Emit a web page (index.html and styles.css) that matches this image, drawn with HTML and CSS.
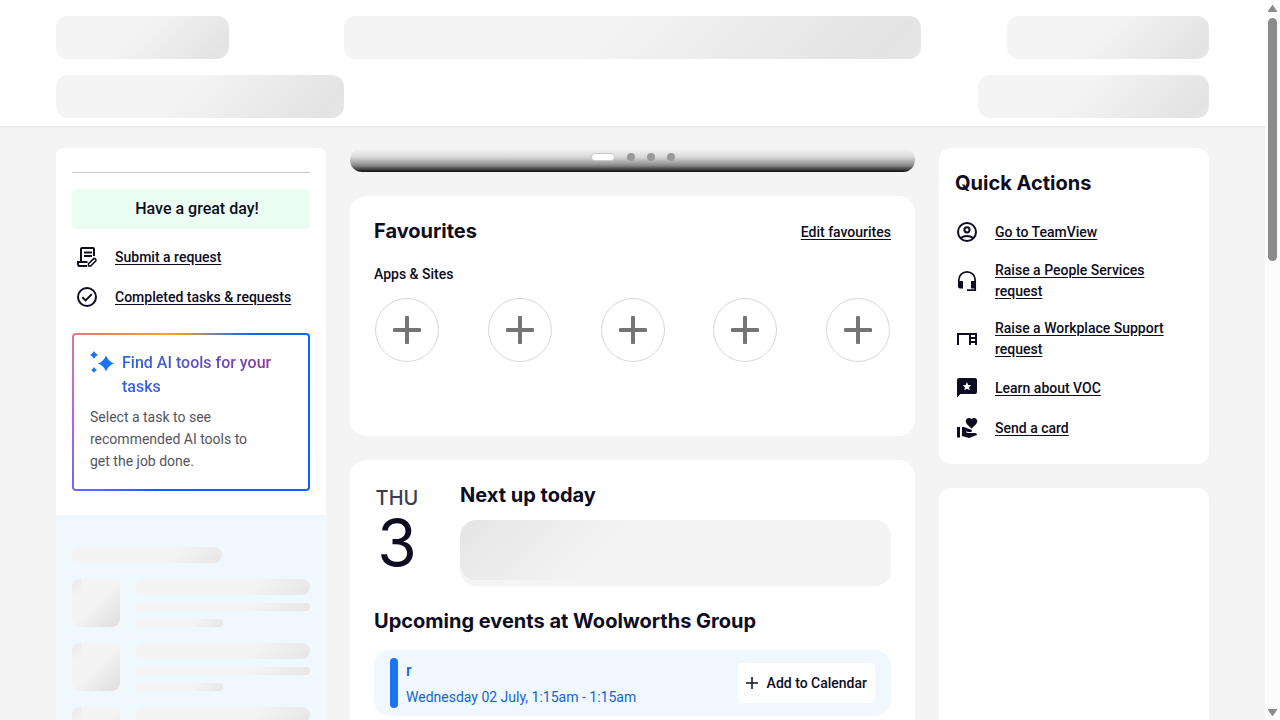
FILE: index.html
```html
<!DOCTYPE html>
<html lang="en">
<head>
<meta charset="utf-8">
<meta name="viewport" content="width=device-width, initial-scale=1">
<title>Home</title>
<link rel="stylesheet" href="styles.css">
</head>
<body>
<div class="viewport">
  <header class="header">
    <div class="header-row">
      <div class="bone bone-logo"></div>
      <div class="bone"></div>
      <div class="bone bone-user"></div>
    </div>
    <div class="header-row">
      <div class="bone"></div>
      <div></div>
      <div class="bone bone-tools"></div>
    </div>
  </header>

  <main class="columns">
    <aside class="profile">
      <div class="profile-top">
        <hr class="divider">
        <p class="greeting">Have a great day!</p>
        <ul class="links links-inset">
          <li>
            <svg class="icon" viewBox="0 0 24 24" aria-hidden="true"><g fill="none" stroke="currentColor" stroke-width="2"><path d="M6 16.500V4a1 1 0 0 1 1-1h11a1 1 0 0 1 1 1v7M12 21H5c-1.300 0-2-.800-2-2v-2h9.500"/><path d="M9 7.500h8M9 11h8"/><path d="M13.500 21v-2.200l5.200-5.200c.8-.8 3 1.300 2.200 2.200L15.700 21z" stroke-width="1.600"/></g></svg>
            <a href="#">Submit a request</a>
          </li>
          <li>
            <svg class="icon" viewBox="0 0 24 24" aria-hidden="true"><g fill="none" stroke="currentColor" stroke-width="2"><circle cx="12" cy="12" r="9"/><path d="M7.300 12.200l3.300 3.200 6.200-6.300"/></g></svg>
            <a href="#">Completed tasks &amp; requests</a>
          </li>
        </ul>
        <section class="ai">
          <div class="ai-head">
            <svg class="icon ai-icon" viewBox="0 0 24 24" aria-hidden="true"><path fill="currentColor" d="M16 4.500q2.200 5.800 8 8-5.800 2.200-8 8-2.200-5.800-8-8 5.800-2.200 8-8zM4 0q1.200 2.800 4 4-2.800 1.200-4 4-1.200-2.800-4-4 2.800-1.200 4-4zM4 16q.9 2.100 3 3-2.100.9-3 3-.9-2.100-3-3 2.100-.9 3-3z"/></svg>
            <h2 class="ai-title">Find AI tools for your tasks</h2>
          </div>
          <p class="ai-text">Select a task to see recommended AI tools to get the job done.</p>
        </section>
      </div>
      <div class="feed">
        <div class="bone-sm feed-title"></div>
        <div class="feed-item"><div class="bone-avatar"></div><div class="feed-lines"><div class="bone-sm"></div><div class="bone-sm bone-thin"></div><div class="bone-sm bone-thin bone-half"></div></div></div>
        <div class="feed-item"><div class="bone-avatar"></div><div class="feed-lines"><div class="bone-sm"></div><div class="bone-sm bone-thin"></div><div class="bone-sm bone-thin bone-half"></div></div></div>
        <div class="feed-item"><div class="bone-avatar"></div><div class="feed-lines"><div class="bone-sm"></div><div class="bone-sm bone-thin"></div><div class="bone-sm bone-thin bone-half"></div></div></div>
      </div>
    </aside>

    <div class="middle">
      <div class="carousel">
        <button class="dot dot-active" aria-label="Slide 1"></button>
        <button class="dot" aria-label="Slide 2"></button>
        <button class="dot" aria-label="Slide 3"></button>
        <button class="dot" aria-label="Slide 4"></button>
      </div>

      <section class="card favourites">
        <div class="card-head">
          <h2 class="title">Favourites</h2>
          <a class="edit" href="#">Edit favourites</a>
        </div>
        <h3 class="subtitle">Apps &amp; Sites</h3>
        <div class="slots">
          <button class="slot" aria-label="Add favourite 1"><svg viewBox="0 0 28 28" aria-hidden="true"><path d="M14 1.500v25M1.500 14h25"/></svg></button>
          <button class="slot" aria-label="Add favourite 2"><svg viewBox="0 0 28 28" aria-hidden="true"><path d="M14 1.500v25M1.500 14h25"/></svg></button>
          <button class="slot" aria-label="Add favourite 3"><svg viewBox="0 0 28 28" aria-hidden="true"><path d="M14 1.500v25M1.500 14h25"/></svg></button>
          <button class="slot" aria-label="Add favourite 4"><svg viewBox="0 0 28 28" aria-hidden="true"><path d="M14 1.500v25M1.500 14h25"/></svg></button>
          <button class="slot" aria-label="Add favourite 5"><svg viewBox="0 0 28 28" aria-hidden="true"><path d="M14 1.500v25M1.500 14h25"/></svg></button>
        </div>
      </section>

      <section class="card agenda">
        <div class="today">
          <div class="date"><span class="weekday">THU</span><span class="day">3</span></div>
          <div class="next">
            <h2 class="title">Next up today</h2>
            <div class="next-bone"><div class="next-shine"></div></div>
          </div>
        </div>
        <h2 class="title upcoming">Upcoming events at Woolworths Group</h2>
        <article class="event">
          <span class="event-bar"></span>
          <div class="event-info">
            <h3 class="event-name">r</h3>
            <p class="event-time">Wednesday 02 July, 1:15am - 1:15am</p>
          </div>
          <button class="add"><svg viewBox="0 0 12 12" aria-hidden="true"><path d="M6 0v12M0 6h12"/></svg>Add to Calendar</button>
        </article>
      </section>
    </div>

    <aside class="side">
      <section class="card quick">
        <h2 class="title quick-title">Quick Actions</h2>
        <ul class="links">
          <li>
            <svg class="icon" viewBox="0 0 24 24" aria-hidden="true"><g fill="none" stroke="currentColor" stroke-width="2"><circle cx="12" cy="12" r="9"/><circle cx="12" cy="9.800" r="2.600"/><path d="M5.800 18c3.400-2.700 9-2.700 12.400 0"/></g></svg>
            <a href="#">Go to TeamView</a>
          </li>
          <li>
            <svg class="icon" viewBox="0 0 24 24" aria-hidden="true"><path d="M3.800 13v-2a8.200 8.200 0 0 1 16.400 0v10.200H12" fill="none" stroke="currentColor" stroke-width="1.700"/><path d="M3 12h5v7.500H5a2 2 0 0 1-2-2zM16 12h5v7.500h-5z" fill="currentColor"/></svg>
            <a href="#">Raise a People Services request</a>
          </li>
          <li>
            <svg class="icon" viewBox="0 0 24 24" aria-hidden="true"><path fill="currentColor" d="M2 6v12h2V8h10v10h2v-2h4v2h2V6zm18 2v2h-4V8zm-4 6v-2h4v2z"/></svg>
            <a href="#">Raise a Workplace Support request</a>
          </li>
          <li>
            <svg class="icon" viewBox="0 0 24 24" aria-hidden="true"><path fill="currentColor" fill-rule="evenodd" d="M4 2h16a2 2 0 0 1 2 2v12a2 2 0 0 1-2 2H5.500L2 21.500V4a2 2 0 0 1 2-2zm8 4l-1.200 2.900-3.100.3 2.300 2-.7 3.100 2.700-1.600 2.700 1.600-.7-3.100 2.300-2-3.100-.3z"/></svg>
            <a href="#">Learn about VOC</a>
          </li>
          <li>
            <svg class="icon" viewBox="0 0 24 24" aria-hidden="true"><path fill="currentColor" d="M2 11h3v10.500H2zM16.500 3.250C17.150 2.490 17.960 2 19 2c1.850 0 3.300 1.450 3.300 3.300 0 2.270-2.710 4.400-5.800 7.200-3.090-2.810-5.800-4.940-5.800-7.200C10.700 3.450 12.150 2 14 2c1.040 0 1.850.49 2.500 1.250zM20 17h-7l-2.090-.73.33-.94L13 16h2.820c.65 0 1.180-.53 1.180-1.180 0-.49-.31-.93-.77-1.110L8.970 11H7v9.020L14 22l8.010-3c-.01-1.100-.9-2-2.010-2z"/></svg>
            <a href="#">Send a card</a>
          </li>
        </ul>
      </section>
      <section class="card blank"></section>
    </aside>
  </main>
</div>
<div class="scrollbar" aria-hidden="true">
  <svg class="arrow" viewBox="0 0 9 7"><path d="M4.500 0Q5 0 5.500 1L9 6v1H0V6l3.500-5Q4 0 4.500 0z"/></svg>
  <div class="track"><div class="thumb"></div></div>
  <svg class="arrow" viewBox="0 0 9 7"><path d="M4.500 7Q4 7 3.500 6L0 1V0h9v1L5.500 6Q5 7 4.500 7z"/></svg>
</div>
</body>
</html>
```
FILE: styles.css
```css
* { box-sizing: border-box; }

body {
  margin: 0;
  display: flex;
  height: 100vh;
  overflow: hidden;
  background: #f4f4f4;
  color: #0d0c22;
  font: 400 14px/20px Roboto, "Liberation Sans", sans-serif;
}

h2, h3, p, ul { margin: 0; padding: 0; }
ul { list-style: none; }
a { color: inherit; }
button { border: 0; padding: 0; font: inherit; color: inherit; cursor: pointer; }

.viewport { flex: 1; min-width: 0; overflow: hidden; }

/* Header placeholders */
.header {
  display: grid;
  gap: 16px;
  padding: 16px 56px 8px;
  background: #fff;
  box-shadow: 0 1px 2px rgba(0, 0, 0, 0.07);
}
.header-row { display: grid; grid-template-columns: 25% 50% 25%; }
.bone {
  height: 43px;
  border-radius: 12px;
  background: linear-gradient(135deg, #f4f4f4 43%, #e3e3e3 92%, #e7e7e7);
}
.bone-logo { width: 60%; }
.bone-user { width: 70%; justify-self: end; }
.bone-tools { width: 80%; justify-self: end; }

.columns {
  display: grid;
  grid-template-columns: 270px minmax(0, 1fr) 270px;
  gap: 24px;
  padding: 22px 56px 24px;
}
.card { background: #fff; border-radius: 16px; }
.title { font: 700 20px/24px Inter, "Liberation Sans", sans-serif; }

/* Left column */
.profile { border-radius: 8px; overflow: hidden; background: #f0f8ff; }
.profile-top { padding: 24px 16px; background: #fff; }
.divider { height: 1px; margin: 0 0 16px; border: 0; background: #c8c8c8; }
.greeting {
  padding: 8px 8px 8px 20px;
  border-radius: 4px;
  background: #ebfdf3;
  font-size: 16px;
  font-weight: 500;
  line-height: 24px;
  text-align: center;
}
.links li {
  display: flex;
  align-items: center;
  gap: 16px;
  min-height: 40px;
  padding: 8px 0;
  font-weight: 500;
  line-height: 21px;
}
.links a { text-underline-offset: 2px; }
.links-inset { padding: 8px 3px 16px; }
.icon { flex: none; width: 24px; height: 24px; }

.ai {
  padding: 16px 16px 17px;
  border: 2px solid transparent;
  border-radius: 4px;
  background:
    linear-gradient(#fff, #fff) padding-box,
    conic-gradient(#c49a4c 0deg, #0a66ff 40deg, #0066ff 205deg, #6a6af8 236deg, #c060f0 272deg, #e07a80 304deg, #ffa800 343deg, #c49a4c 360deg) border-box;
}
.ai-head { display: flex; gap: 8px; margin-bottom: 7px; }
.ai-icon { color: #1a73f0; }
.ai-title {
  font-size: 16px;
  font-weight: 500;
  line-height: 24px;
  background: linear-gradient(90deg, #2a66e4, #8a389c 150px);
  -webkit-background-clip: text;
  background-clip: text;
  color: transparent;
}
.ai-text { max-width: 172px; line-height: 22px; color: #54545f; }

.feed { display: grid; gap: 16px; padding: 32px 16px 16px; }
.feed-item { display: grid; grid-template-columns: 48px 1fr; gap: 16px; }
.feed-lines { display: grid; gap: 8px; }
.bone-sm {
  height: 16px;
  border-radius: 8px;
  background: linear-gradient(135deg, #f4f4f4 65%, #e6e6e6);
}
.bone-thin { height: 8px; border-radius: 4px; }
.bone-half { width: 50%; }
.feed-title { width: 150px; }
.bone-avatar {
  height: 48px;
  border-radius: 8px;
  background:
    linear-gradient(135deg, #e9e9e9, #f4f4f4) 0 0 / 9px 14px no-repeat,
    linear-gradient(135deg, #f4f4f4 48%, #e2e2e2 90%, #e8e8e8);
}

/* Middle column */
.middle { display: grid; align-content: start; gap: 24px; }
.carousel {
  display: flex;
  justify-content: center;
  gap: 12px;
  height: 24px;
  padding-top: 5px;
  border-radius: 12px;
  background: linear-gradient(#f4f4f4 4%, #d8d8d8 38%, #8c8c8c 72%, #101010);
}
.dot { width: 8px; height: 8px; border-radius: 4px; background: #999; }
.dot-active { width: 24px; border: 1px solid #c8c8c8; background: #fff; }

.favourites { min-height: 240px; padding: 23px 24px 24px; }
.card-head { display: flex; justify-content: space-between; align-items: flex-end; }
.edit { font-weight: 500; line-height: 22px; text-underline-offset: 2px; }
.subtitle { margin-top: 21px; font-size: 14px; font-weight: 500; line-height: 20px; }
.slots { display: flex; justify-content: space-between; padding: 14px 1px 0; }
.slot {
  display: grid;
  place-items: center;
  width: 64px;
  height: 64px;
  border: 1px solid #d8d8d8;
  border-radius: 50%;
  background: #fff;
}
.slot svg { width: 28px; height: 28px; stroke: #757575; stroke-width: 4px; stroke-linecap: round; }

.agenda { padding: 23px 24px 24px; }
.today { display: grid; grid-template-columns: 46px minmax(0, 1fr); gap: 40px; }
.date {
  display: flex;
  flex-direction: column;
  align-items: center;
  padding-top: 3px;
  font-family: Inter, "Liberation Sans", sans-serif;
}
.weekday { font-size: 20px; font-weight: 500; line-height: 24px; color: #3d3d50; }
.day { font-size: 64px; line-height: 66px; }
.next-bone { height: 66px; margin-top: 13px; border-radius: 16px; background: #f4f4f4; overflow: hidden; }
.next-shine {
  height: 60px;
  border-radius: 16px;
  background: linear-gradient(135deg, #e5e5e5, #f4f4f4 38%);
}
.upcoming { margin-top: 23px; }
.event {
  display: flex;
  align-items: center;
  gap: 8px;
  margin-top: 17px;
  padding: 8px 16px;
  border-radius: 16px;
  background: #f0f8ff;
  color: #1463d8;
}
.event-bar { align-self: stretch; width: 8px; border-radius: 4px; background: #1a73f0; }
.event-info { flex: 1; padding: 1px 0; }
.event-name { font-size: 16px; font-weight: 500; line-height: 24px; }
.event-time { margin-top: 4px; line-height: 20px; }
.add {
  display: flex;
  align-items: center;
  gap: 9px;
  height: 40px;
  padding: 0 8px 1px;
  border-radius: 4px;
  background: #fff;
  color: #0d0c22;
  font-weight: 500;
}
.add svg { width: 12px; height: 12px; stroke: currentColor; stroke-width: 1.5px; }

/* Right column */
.side { display: grid; align-content: start; gap: 24px; }
.side .card { border-radius: 12px; }
.quick { padding: 16px; }
.quick-title { padding: 7px 0 17px; }
.blank { min-height: 320px; }

/* Scrollbar */
.scrollbar {
  flex: none;
  display: flex;
  flex-direction: column;
  align-items: center;
  gap: 6px;
  width: 15px;
  padding: 5px 0 4px;
  background: #fcfcfc;
}
.arrow { width: 9px; height: 7px; fill: #8b8b8b; }
.track { flex: 1; }
.thumb { width: 9px; height: 35%; min-height: 243px; border-radius: 5px; background: #8b8b8b; }
```
